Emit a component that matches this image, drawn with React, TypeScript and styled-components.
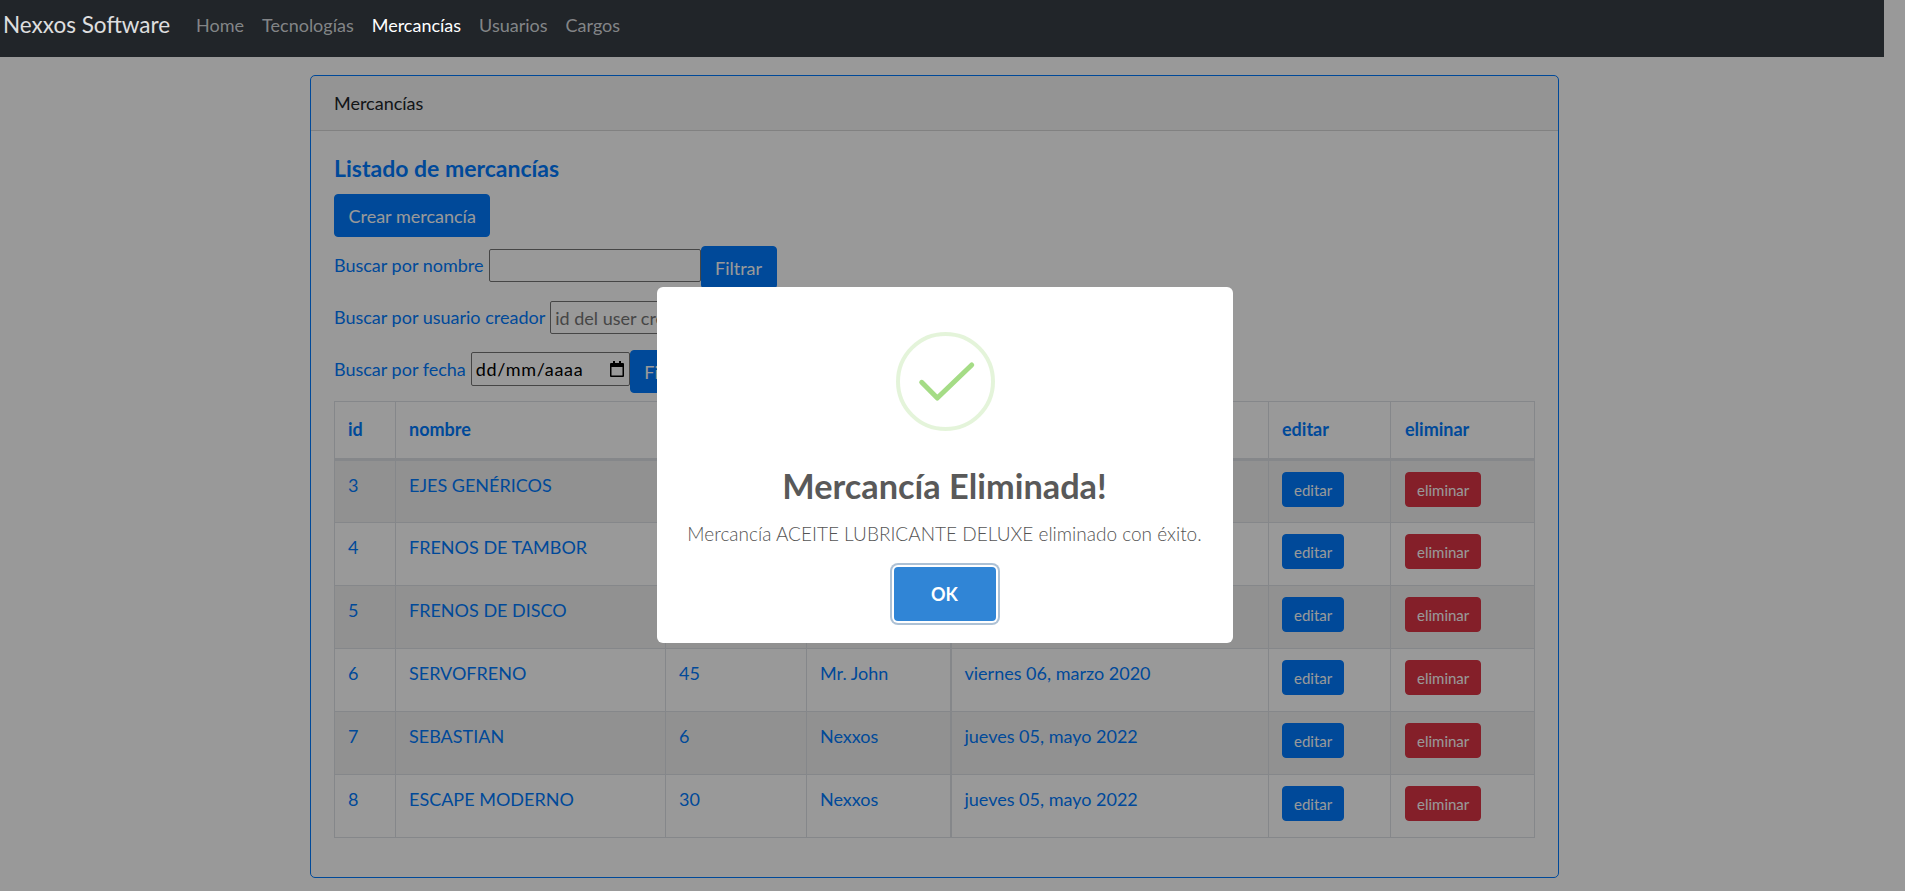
import React from 'react'
import styled, { createGlobalStyle } from 'styled-components'

const GlobalStyle = createGlobalStyle`
  html, body {
    margin: 0;
    padding: 0;
    height: 100%;
    overflow: hidden;
    background: #fff;
  }
  body {
    font-family: Lato, "Open Sans", "Liberation Sans", sans-serif;
    font-size: 18px;
    line-height: 24px;
    color: #212529;
  }
  * {
    box-sizing: border-box;
  }
`

const Navbar = styled.nav`
  position: relative;
  z-index: 1100;
  display: flex;
  align-items: center;
  width: 1884px;
  height: 57px;
  padding: 0 0 7px 3px;
  background: #212529;
`

const Brand = styled.a`
  font-size: 22.5px;
  color: #fff;
  opacity: 0.85;
  margin-right: 26px;
`

const NavLink = styled.a<{ $active?: boolean }>`
  margin-right: 18px;
  color: ${p => (p.$active ? '#fff' : 'rgba(255, 255, 255, 0.45)')};
`

const Card = styled.section`
  width: 1249px;
  height: 803px;
  margin: 18px 0 0 310px;
  border: 1px solid #007bff;
  border-radius: 5px;
`

const CardHeader = styled.header`
  height: 55px;
  padding: 15px 23px 0;
  background: rgba(0, 0, 0, 0.03);
  border-bottom: 1px solid rgba(0, 0, 0, 0.125);
`

const CardBody = styled.div`
  padding: 23px 23px 0;
  color: #007bff;
`

const Title = styled.h5`
  margin: 0 0 11px;
  font-size: 23px;
  font-weight: 700;
  line-height: 29px;
`

const Button = styled.button<{ $danger?: boolean; $small?: boolean }>`
  display: inline-block;
  flex: none;
  height: ${p => (p.$small ? 35 : 43)}px;
  padding: 0 ${p => (p.$small ? 11 : 13.5)}px;
  border: 1px solid ${p => (p.$danger ? '#dc3545' : '#007bff')};
  border-radius: 4px;
  background: ${p => (p.$danger ? '#dc3545' : '#007bff')};
  color: #fff;
  font-family: inherit;
  font-size: ${p => (p.$small ? 15 : 18)}px;
`

const FilterRow = styled.div`
  display: flex;
  align-items: flex-start;
  height: 43px;
  margin-top: 9px;
  white-space: nowrap;
`

const Label = styled.label`
  margin: 7px 5px 0 0;
`

const TextInput = styled.input`
  width: 212px;
  height: 33px;
  margin-top: 3px;
  padding: 0 4px;
  border: 1px solid #767676;
  border-radius: 2px;
  background: #fff;
  font-family: inherit;
  font-size: 18px;
  color: #000;
  &::placeholder {
    color: #757575;
    opacity: 1;
  }
`

const DateInput = styled.div`
  display: flex;
  align-items: center;
  justify-content: space-between;
  width: 159px;
  height: 34px;
  margin-top: 2px;
  padding: 0 5px 0 4px;
  border: 1px solid #767676;
  border-radius: 2px;
  background: #fff;
  color: #000;
  letter-spacing: 0.7px;
`

const Table = styled.table`
  width: 1201px;
  margin-top: 8px;
  border-collapse: collapse;
  table-layout: fixed;
`

const HeadCell = styled.th<{ $wide?: boolean }>`
  height: 58px;
  padding: 0 13px 2px;
  border: 1px solid #dee2e6;
  border-bottom: 3px solid #dee2e6;
  ${p => p.$wide && 'border-left-width: 2px;'}
  text-align: left;
  font-weight: 700;
  &:last-child {
    padding-left: 14px;
  }
`

const Row = styled.tr<{ $striped?: boolean }>`
  background: ${p => (p.$striped ? 'rgba(0, 0, 0, 0.05)' : 'transparent')};
`

const Cell = styled.td<{ $wide?: boolean }>`
  height: 63px;
  padding: 12px 13px 0;
  border: 1px solid #dee2e6;
  ${p => p.$wide && 'border-left-width: 2px;'}
  vertical-align: top;
  &:last-child {
    padding-left: 14px;
  }
`

const ActionCell = styled(Cell)`
  padding-top: 11px;
`

const Overlay = styled.div`
  position: fixed;
  inset: 0;
  z-index: 1060;
  display: flex;
  align-items: center;
  justify-content: center;
  padding: 39px 16px 0 0;
  background: rgba(0, 0, 0, 0.4);
`

const Modal = styled.div`
  display: flex;
  flex-direction: column;
  align-items: center;
  width: 576px;
  height: 356px;
  padding-top: 45px;
  border-radius: 6px;
  background: #fff;
`

const IconSvg = styled.svg`
  margin-left: 1px;
`

const ModalTitle = styled.h2`
  margin: 33px 0 0;
  font-size: 34.3px;
  font-weight: 700;
  line-height: 44px;
  color: #595959;
`

const ModalText = styled.p`
  margin: 12px 0 0;
  font-size: 19px;
  font-weight: 300;
  line-height: 28px;
  color: #545454;
`

const Confirm = styled.button`
  width: 102px;
  height: 54px;
  margin-top: 19px;
  border: 0;
  border-radius: 4px;
  background: #3085d6;
  color: #fff;
  font-family: inherit;
  font-size: 18px;
  font-weight: 700;
  box-shadow: 0 0 0 2px #fff, 0 0 0 4px rgba(50, 100, 150, 0.4);
`

const columns = [61, 270, 141, 144, 318, 122, 144]

// the modal hides the middle columns of the first rows, so they stay empty
const items = [
  { id: 3, name: 'EJES GENÉRICOS', stock: '', user: '', date: '' },
  { id: 4, name: 'FRENOS DE TAMBOR', stock: '', user: '', date: '' },
  { id: 5, name: 'FRENOS DE DISCO', stock: '', user: '', date: '' },
  { id: 6, name: 'SERVOFRENO', stock: '45', user: 'Mr. John', date: 'viernes 06, marzo 2020' },
  { id: 7, name: 'SEBASTIAN', stock: '6', user: 'Nexxos', date: 'jueves 05, mayo 2022' },
  { id: 8, name: 'ESCAPE MODERNO', stock: '30', user: 'Nexxos', date: 'jueves 05, mayo 2022' },
]

const CalendarIcon = () => (
  <svg width="14" height="16" viewBox="0 0 14 16">
    <path d="M3 0h2v2h4V0h2v2h2a1 1 0 0 1 1 1v12a1 1 0 0 1-1 1H1a1 1 0 0 1-1-1V3a1 1 0 0 1 1-1h2V0zM1.5 6v8.5h11V6h-11z" fill="#000" fillRule="evenodd" />
  </svg>
)

const SuccessIcon = () => (
  <IconSvg width="99" height="99" viewBox="0 0 99 99">
    <circle cx="49.5" cy="49.5" r="47.5" fill="none" stroke="rgba(165, 220, 134, 0.3)" strokeWidth="4" />
    <path d="M25.7 50.3 41.3 66 75.7 33" fill="none" stroke="#a5dc86" strokeWidth="5" strokeLinecap="round" strokeLinejoin="round" />
  </IconSvg>
)

const App = () => {
  return (
    <>
      <GlobalStyle />
      <Navbar>
        <Brand>Nexxos Software</Brand>
        <NavLink>Home</NavLink>
        <NavLink>Tecnologías</NavLink>
        <NavLink $active>Mercancías</NavLink>
        <NavLink>Usuarios</NavLink>
        <NavLink>Cargos</NavLink>
      </Navbar>
      <Card>
        <CardHeader>Mercancías</CardHeader>
        <CardBody>
          <Title>Listado de mercancías</Title>
          <Button>Crear mercancía</Button>
          <FilterRow>
            <Label>Buscar por nombre</Label>
            <TextInput />
            <Button>Filtrar</Button>
          </FilterRow>
          <FilterRow>
            <Label>Buscar por usuario creador</Label>
            <TextInput placeholder="id del user creador" />
            <Button>Filtrar</Button>
          </FilterRow>
          <FilterRow>
            <Label>Buscar por fecha</Label>
            <DateInput>
              dd/mm/aaaa
              <CalendarIcon />
            </DateInput>
            <Button>Filtrar</Button>
          </FilterRow>
          <Table>
            <colgroup>
              {columns.map((w, i) => (
                <col key={i} width={w} />
              ))}
            </colgroup>
            <thead>
              <tr>
                <HeadCell>id</HeadCell>
                <HeadCell>nombre</HeadCell>
                <HeadCell />
                <HeadCell />
                <HeadCell $wide />
                <HeadCell>editar</HeadCell>
                <HeadCell>eliminar</HeadCell>
              </tr>
            </thead>
            <tbody>
              {items.map((item, i) => (
                <Row key={item.id} $striped={i % 2 === 0}>
                  <Cell>{item.id}</Cell>
                  <Cell>{item.name}</Cell>
                  <Cell>{item.stock}</Cell>
                  <Cell>{item.user}</Cell>
                  <Cell $wide>{item.date}</Cell>
                  <ActionCell>
                    <Button $small>editar</Button>
                  </ActionCell>
                  <ActionCell>
                    <Button $small $danger>eliminar</Button>
                  </ActionCell>
                </Row>
              ))}
            </tbody>
          </Table>
        </CardBody>
      </Card>
      <Overlay>
        <Modal>
          <SuccessIcon />
          <ModalTitle>Mercancía Eliminada!</ModalTitle>
          <ModalText>Mercancía ACEITE LUBRICANTE DELUXE eliminado con éxito.</ModalText>
          <Confirm>OK</Confirm>
        </Modal>
      </Overlay>
    </>
  )
}

export default App
